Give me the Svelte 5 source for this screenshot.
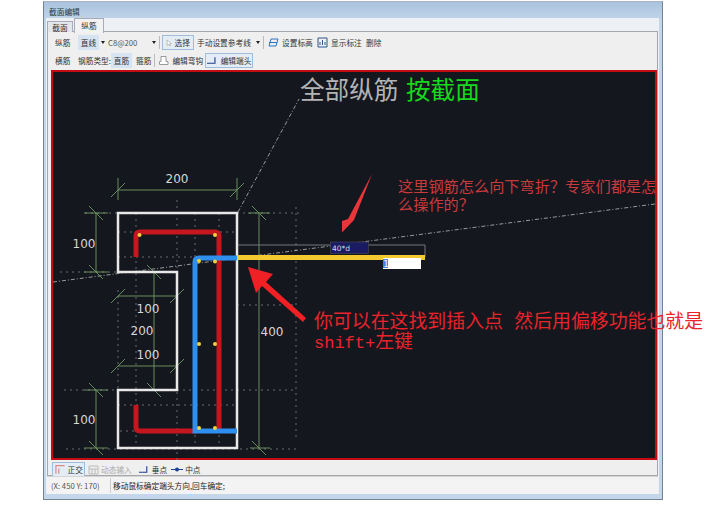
<script>
	const dashes = [
		[85, 213, 118, 213], [237, 213, 300, 213], [118, 232, 237, 232], [118, 257, 237, 257],
		[60, 272, 118, 272], [237, 305, 297, 305], [64, 390, 118, 390], [177, 390, 297, 390],
		[118, 405, 237, 405], [120, 431, 136, 431], [66, 449, 300, 449],
		[136, 213, 136, 448], [177, 200, 177, 460], [195, 213, 195, 448], [219, 213, 219, 448],
		[118, 290, 118, 400], [296, 207, 296, 440]
	];
	const dots = [
		[139.5, 235], [215, 235], [199, 261], [215, 261.5],
		[199, 344], [215, 344], [199, 428], [215, 428]
	];
	// slashes on dimension lines: horizontal dims lean "/", vertical dims lean "\"
	const forward = [[118, 190], [237, 190], [118, 366], [177, 366], [118, 296], [177, 296]];
	const back = [[96, 213], [96, 272], [96, 390], [96, 448], [154, 272], [154, 390], [259, 213], [259, 448]];
	const dims = [
		[118, 190, 237, 190], [96, 213, 96, 272], [96, 390, 96, 448],
		[118, 296, 177, 296], [118, 366, 177, 366], [154, 272, 154, 390], [259, 213, 259, 448],
		[118, 178, 118, 200], [237, 178, 237, 200], [84, 213, 108, 213], [84, 272, 108, 272],
		[84, 390, 108, 390], [84, 448, 108, 448], [248, 213, 270, 213], [250, 448, 270, 448]
	];
	const labels = [
		[177, 183, '200'], [84, 248, '100'], [148, 313, '100'], [142, 335, '200'],
		[148, 359, '100'], [84, 424, '100'], [272, 336, '400']
	];
</script>

<div class="page">
	<div class="window">
		<div class="title">截面编辑</div>
		<div class="client">
			<div class="tabs">
				<span class="tab">截面</span>
				<span class="tab on">纵筋</span>
			</div>
			<div class="panel">
				<div class="bar first">
					<span class="lead">纵筋</span>
					<span class="btn fill w21">直线</span>
					<span class="caret"></span>
					<span class="combo">C8@200</span>
					<span class="caret"></span>
					<span class="sep"></span>
					<span class="btn line select">
						<svg width="11" height="12" viewBox="0 0 11 12"><path d="M2 1v9l2.500-2 1.500 3 1.500-.8-1.500-2.900 3-.3z" fill="#fff" stroke="#888" stroke-width=".8" /></svg>
						选择
					</span>
					<span class="manual">手动设置参考线</span>
					<span class="caret"></span>
					<span class="sep"></span>
					<svg class="ico" width="11" height="11" viewBox="0 0 11 11"><path d="M3 2h7L8 9H1zM1 5.500h8" fill="none" stroke="#2f73c0" /></svg>
					<span class="text level">设置标高</span>
					<svg class="ico" width="11" height="11" viewBox="0 0 11 11"><path d="M1 1h9v9H1zM3 8V5M5.500 8V3M8 8V5" fill="none" stroke="#33558a" /></svg>
					<span class="text show">显示标注</span>
					<span class="text">删除</span>
				</div>
				<div class="bar second">
					<span class="lead">横筋</span>
					<span class="text type">钢筋类型:</span>
					<span class="btn fill w21">直筋</span>
					<span class="text stir">箍筋</span>
					<span class="sep"></span>
					<svg class="ico" width="11" height="11" viewBox="0 0 11 11"><path d="M3 1.500h5v5h2v3H1.500V6.500H3z" fill="#fff" stroke="#999" /></svg>
					<span class="text hook">编辑弯钩</span>
					<span class="btn fill line head">
						<svg width="12" height="11" viewBox="0 0 12 11"><path d="M0 8.500h8M8.500 2v7" fill="none" stroke="#1f3f8f" stroke-width="1.200" /></svg>
						编辑端头
					</span>
				</div>

				<div class="canvas">
					<svg width="602" height="386" viewBox="53 72 602 386">
						{#each dashes as [x1, y1, x2, y2]}
							<line {x1} {y1} {x2} {y2} class="grid" />
						{/each}
						<path d="M53 282 L655 204" class="ref" />
						<path d="M238 212 L299 99" class="ref" />

						{#each dims as [x1, y1, x2, y2]}
							<line {x1} {y1} {x2} {y2} class="dim" />
						{/each}
						{#each forward as [x, y]}
							<line x1={x - 7} y1={y + 7} x2={x + 7} y2={y - 7} class="dim" />
						{/each}
						{#each back as [x, y]}
							<line x1={x - 7} y1={y - 7} x2={x + 7} y2={y + 7} class="dim" />
						{/each}

						<path d="M118 213H237V448H118V390H177V272H118Z" class="outline" />
						<path d="M136 257V236Q136 232 140 232H215Q219 232 219 236V431" class="red" />
						<path d="M136 405V427Q136 431 140 431H197" class="red" />
						<path d="M237 431H195V262Q195 258 199 258H237" class="blue" />
						{#each dots as [cx, cy]}
							<circle {cx} {cy} r="2" fill="#f2d33c" />
						{/each}

						{#each labels as [x, y, t]}
							<text {x} {y} class="num">{t}</text>
						{/each}

						<path d="M238 245H425V257" class="gray" />
						<line x1="237" y1="257.500" x2="425" y2="257.500" class="yellow" />
						<rect x="330.500" y="242" width="38" height="11.500" fill="#1b1b62" stroke="#555" stroke-width=".5" />
						<text x="332" y="251" class="tag">40*d</text>
						<rect x="383" y="258" width="38" height="11" fill="#fff" />
						<rect x="383" y="259" width="5" height="9" fill="#3f86e8" />
						<text x="383.500" y="267" class="cursor">1</text>

						<polygon points="372,174 354,220 342,232.500 342,221 348,219" fill="#e8363a" />
						<polygon points="248,267 273,274 266,282 306,318 303,322 262,286 256,293" fill="#f02024" />

						<text x="300" y="99" class="big">全部纵筋</text>
						<text x="406" y="99" class="big green">按截面</text>
					</svg>
					<div class="note">这里钢筋怎么向下弯折？专家们都是怎么操作的？</div>
					<div class="say">你可以在这找到插入点 然后用偏移功能也就是<span class="latin">shift+</span>左键</div>
				</div>

				<div class="bar third">
					<span class="btn line ortho">
						<svg width="12" height="11" viewBox="0 0 12 11"><path d="M2 10V1.500H11M5 10V4.500" fill="none" stroke="#d98a80" stroke-width="1.200" /></svg>
						正交
					</span>
					<span class="text off">
						<svg width="11" height="11" viewBox="0 0 11 11"><path d="M1 2h9v8H1zM1 5h9M4 5v5M7 5v5" fill="none" stroke="#bbb" /></svg>
						动态输入
					</span>
					<span class="text perp">
						<svg width="11" height="11" viewBox="0 0 12 11"><path d="M0 8.500h8M8.500 2v7" fill="none" stroke="#1f3f8f" stroke-width="1.200" /></svg>
						垂点
					</span>
					<span class="text mid">
						<svg width="12" height="11" viewBox="0 0 12 11"><path d="M0 5.500h12" stroke="#1f3f8f" /><circle cx="6" cy="5.500" r="2" fill="#1f3f8f" /></svg>
						中点
					</span>
				</div>
			</div>
			<div class="status">
				<span class="coord">(X: 450 Y: 170)</span>
				<span class="hint">移动鼠标确定端头方向,回车确定;</span>
			</div>
		</div>
	</div>
</div>

<style>
	:global(body) {
		margin: 0;
		background: #fff;
	}
	.page {
		width: 706px;
		height: 511px;
		padding: 1px 0 0 43px;
		box-sizing: border-box;
		overflow: hidden;
		font-family: "Noto Sans CJK SC", "Liberation Sans", sans-serif;
		font-size: 7.700px;
		color: #333;
	}
	.window {
		width: 620px;
		height: 499px;
		box-sizing: border-box;
		display: flex;
		flex-direction: column;
		border: 1px solid #75838f;
		border-top-color: #aab4be;
		background: linear-gradient(#a9c3df, #c4d7ea 20px);
		padding: 0 3px 5px 2px;
	}
	.title {
		height: 16px;
		line-height: 20px;
		padding-left: 3px;
		color: #333;
	}
	.client {
		flex: 1;
		display: flex;
		flex-direction: column;
		background: #edf0f4;
		padding: 0 1px 0 1px;
		min-height: 0;
	}
	.tabs {
		display: flex;
		height: 13px;
		gap: 1px;
		position: relative;
		z-index: 1;
	}
	.tab {
		width: 24px;
		height: 10px;
		margin-top: 3px;
		line-height: 11px;
		text-align: center;
		background: #e3e7ec;
		border: 1px solid #aab;
		border-bottom: 0;
	}
	.tab.on {
		width: 28px;
		height: 14px;
		margin-top: 0;
		background: #f2f2f2;
		line-height: 13px;
	}
	.panel {
		flex: 1;
		border: 1px solid #a4a8ac;
		background: #efefef;
		padding-left: 3px;
		display: flex;
		flex-direction: column;
		min-height: 0;
	}
	.bar {
		display: flex;
		align-items: center;
		height: 15px;
		padding-left: 4px;
		white-space: nowrap;
		flex: none;
	}
	.bar.first {
		margin-top: 3px;
	}
	.bar.second {
		margin: 3px 0 2px;
	}
	.bar.third {
		margin-top: 2px;
		padding-left: 1px;
	}
	.lead {
		width: 23px;
	}
	.btn {
		display: inline-flex;
		align-items: center;
		gap: 2px;
		height: 15px;
		padding: 0 3px;
		box-sizing: border-box;
	}
	.w21 {
		width: 21px;
		justify-content: center;
		padding: 0;
	}
	.fill {
		background: #d6e4f2;
	}
	.line {
		border: 1px solid #9ebddc;
		background: #e4edf6;
	}
	.combo {
		width: 43px;
		margin-left: 3px;
		margin-right: -1px;
		color: #555;
	}
	.caret {
		width: 0;
		height: 0;
		margin-left: 2px;
		border: 2.500px solid transparent;
		border-top: 3px solid #222;
		border-bottom: 0;
	}
	.sep {
		width: 1px;
		height: 13px;
		background: #bbb;
		margin: 0 1px 0 3px;
	}
	.select {
		width: 32px;
		margin-left: 1px;
		justify-content: space-between;
	}
	.manual {
		width: 55px;
		margin-left: 3px;
		margin-right: 2px;
	}
	.first .ico {
		margin: 0 3px 0 3px;
	}
	.second .ico {
		margin: 0 3px 0 2px;
	}
	.text {
		display: inline-flex;
		align-items: center;
		gap: 2px;
	}
	.level {
		width: 32px;
	}
	.show {
		width: 35px;
	}
	.type {
		width: 33px;
	}
	.stir {
		margin-left: 4px;
	}
	.hook {
		width: 33px;
	}
	.head {
		width: 48px;
		padding: 0 1px;
	}
	.ortho {
		width: 33px;
		padding: 0 1px;
	}
	.off {
		color: #aaa;
		margin-left: 3px;
	}
	.perp {
		margin-left: 7px;
	}
	.mid {
		margin-left: 4px;
	}
	.canvas {
		position: relative;
		width: 606px;
		height: 390px;
		box-sizing: border-box;
		border: 2px solid #c40d12;
		background: #15171f;
		flex: none;
	}
	.canvas svg {
		display: block;
		overflow: visible;
	}
	.grid {
		stroke: #7f8484;
		stroke-width: 0.8;
		stroke-dasharray: 2 4;
	}
	.ref {
		fill: none;
		stroke: #b8bcb8;
		stroke-width: 0.8;
		stroke-dasharray: 4 2 1 2;
	}
	.dim {
		stroke: #6f9a62;
		stroke-width: 0.9;
	}
	.outline {
		fill: none;
		stroke: #e8e8e8;
		stroke-width: 2.500;
	}
	.red {
		fill: none;
		stroke: #c4161c;
		stroke-width: 5;
	}
	.blue {
		fill: none;
		stroke: #2f8fef;
		stroke-width: 5;
	}
	.gray {
		fill: none;
		stroke: #77787c;
		stroke-width: 1;
	}
	.yellow {
		stroke: #f3c92f;
		stroke-width: 5;
	}
	.num {
		fill: #d8d8d8;
		font: 12px "DejaVu Sans", sans-serif;
		text-anchor: middle;
	}
	.tag {
		fill: #d6d8ee;
		font: 7.500px "DejaVu Sans", sans-serif;
	}
	.cursor {
		fill: #fff;
		font: 8px "DejaVu Sans", sans-serif;
	}
	.big {
		fill: #b4b4b4;
		font-size: 24.600px;
	}
	.big.green {
		fill: #17d81d;
	}
	.note {
		position: absolute;
		left: 345px;
		top: 104px;
		width: 262px;
		font-size: 15.200px;
		line-height: 18px;
		color: #c93a3c;
	}
	.say {
		position: absolute;
		left: 261px;
		top: 241px;
		width: 392px;
		font-family: "Liberation Mono", "Noto Sans CJK SC", monospace;
		font-size: 18.900px;
		line-height: 20px;
		color: #e8242a;
	}
	.latin {
		font-size: 17px;
	}
	.status {
		height: 17px;
		flex: none;
		display: flex;
		align-items: center;
		background: #f3f3f3;
		border-top: 1px solid #d4d4d4;
	}
	.coord {
		width: 59px;
		padding-left: 4px;
		border-right: 1px solid #ccc;
		line-height: 15px;
		margin-right: 2px;
		color: #555;
	}
	.hint {
		color: #222;
	}
</style>
